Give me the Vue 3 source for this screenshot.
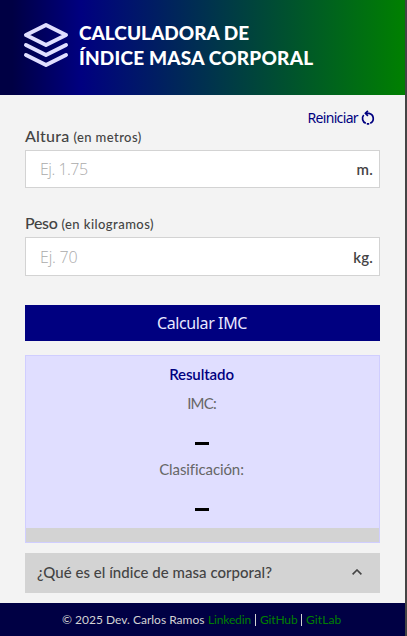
<script setup>
import { ref } from 'vue'

const height = ref('')
const weight = ref('')
const bmi = ref('')
const category = ref('')

function calculate() {
  const h = parseFloat(height.value)
  const w = parseFloat(weight.value)
  if (!(h > 0) || !(w > 0)) return
  const value = w / (h * h)
  bmi.value = value.toFixed(1)
  category.value = value < 18.5 ? 'Bajo peso' : value < 25 ? 'Normal' : value < 30 ? 'Sobrepeso' : 'Obesidad'
}

function reset() {
  height.value = ''
  weight.value = ''
  bmi.value = ''
  category.value = ''
}
</script>

<template>
  <div class="page">
    <header class="header">
      <svg class="logo" viewBox="0 0 24 24" fill="none" stroke="#e0deff" stroke-width="2" stroke-linecap="round" stroke-linejoin="round">
        <polygon points="12 2 2 7 12 12 22 7" />
        <polyline points="2 12 12 17 22 12" />
        <polyline points="2 17 12 22 22 17" />
      </svg>
      <h1 class="title"><span class="t1">CALCULADORA DE</span><br /><span class="t2">ÍNDICE MASA CORPORAL</span></h1>
    </header>

    <main class="main">
      <button class="reset" type="button" @click="reset">
        <span class="reset-text">Reiniciar</span>
        <svg class="reset-icon" viewBox="0 0 14 16" fill="none" stroke="#000080" stroke-width="1.7">
          <path d="M4.8 3.3H8A5.3 5.3 0 0 1 9.2 13.3M8.2 13.8H5.8M4.8 13.3A5.3 5.3 0 0 1 2.7 5" />
          <path d="M6.9 .8L4.4 3.3l2.5 2.5" />
        </svg>
      </button>

      <label class="label" for="height"><span class="altura">Altura</span><span class="hint metros">(en metros)</span></label>
      <div class="field">
        <input id="height" v-model="height" class="input" placeholder="Ej. 1.75" />
        <span class="unit">m.</span>
      </div>

      <label class="label second" for="weight"><span class="peso">Peso</span><span class="hint kilos">(en kilogramos)</span></label>
      <div class="field tall">
        <input id="weight" v-model="weight" class="input" placeholder="Ej. 70" />
        <span class="unit">kg.</span>
      </div>

      <button class="calculate" type="button" @click="calculate">Calcular IMC</button>

      <section class="result">
        <h2 class="result-title">Resultado</h2>
        <p class="caption imc">IMC:</p>
        <p class="value"><span v-if="bmi">{{ bmi }}</span><i v-else class="dash"></i></p>
        <p class="caption">Clasificación:</p>
        <p class="value"><span v-if="category">{{ category }}</span><i v-else class="dash"></i></p>
        <div class="band"></div>
      </section>

      <div class="question">
        <span class="question-text">¿Qué es el índice de masa corporal?</span>
        <svg class="chevron" viewBox="0 0 10 6" fill="none" stroke="#444" stroke-width="1.6"><path d="M.6 5.4L5 1l4.4 4.4" /></svg>
      </div>
    </main>

    <footer class="footer">
      <span class="copy">© 2025 Dev. Carlos Ramos</span>
      <a class="link linkedin">Linkedin</a>
      <i class="bar"></i>
      <a class="link github">GitHub</a>
      <i class="bar"></i>
      <a class="link gitlab">GitLab</a>
    </footer>
  </div>
</template>

<style>
body { margin: 0; overflow: hidden; }
</style>

<style scoped>
* { box-sizing: border-box; }
.page {
  width: 407px;
  height: 636px;
  display: flex;
  flex-direction: column;
  background: #f3f3f3;
  border-right: 2px solid #444;
  font-family: Lato, sans-serif;
  color: #444;
}
.header {
  height: 95px;
  flex: none;
  display: flex;
  padding: 21px 0 0 22px;
  background: linear-gradient(90deg, #000044 0, #000044 3%, #000080 20%, #008000 100%);
}
.logo { width: 48px; height: 48px; flex: none; }
.title {
  margin: -1px 0 0 9px;
  font-size: 19px;
  line-height: 25px;
  font-weight: 900;
  color: #fff;
  white-space: nowrap;
}
.t1 { letter-spacing: 0; }
.t2 { letter-spacing: 0.2px; }
.main { height: 508px; flex: none; display: flex; flex-direction: column; padding: 12px 25px 0; }
button { border: 0; padding: 0; }
.reset {
  align-self: flex-end;
  display: flex;
  align-items: center;
  height: 20px;
  margin-right: 6px;
  background: none;
  color: #000080;
  font: 14px/20px "Noto Sans", sans-serif;
}
.reset-text { margin-top: 2px; letter-spacing: -0.65px; }
.reset-icon { width: 14px; height: 16px; margin: 1px -1px 0 3px; }
.label { display: flex; align-items: baseline; height: 23px; line-height: 18px; font-size: 16px; font-weight: 500; white-space: nowrap; }
.altura { letter-spacing: 0.2px; }
.peso { letter-spacing: -0.35px; }
.hint { font-size: 13px; margin-left: 4px; }
.metros { letter-spacing: 0.42px; }
.kilos { letter-spacing: 0.45px; }
.second { margin-top: 26px; }
.field { display: flex; align-items: center; width: 355px; height: 38px; background: #fff; border: 1px solid #d3d3d3; }
.tall { height: 39px; margin-top: 0; }
.input {
  flex: 1;
  min-width: 0;
  height: 36px;
  padding: 0 0 0 14px;
  border: 0;
  outline: 0;
  background: none;
  font: 300 16px "Open Sans", sans-serif;
  letter-spacing: -0.5px;
  color: #444;
}
.tall .input { letter-spacing: -0.2px; }
.input::placeholder { color: #aaa; opacity: 1; }
.unit { font-size: 15px; font-weight: 600; margin: 0 6px 0 0; letter-spacing: 0.2px; }
.calculate { height: 36px; flex: none; margin-top: 29px; padding-right: 1px; background: #000080; color: #e8e8ff; font: 16px/36px "Noto Sans", sans-serif; letter-spacing: -0.4px; }
.result { height: 188px; flex: none; display: flex; flex-direction: column; align-items: center; margin-top: 14px; border: 1px solid #d0ceff; background: #e0deff; }
.result-title { margin: 8px 2px 0 0; height: 30px; font-size: 15px; line-height: 20px; font-weight: 600; letter-spacing: -0.1px; color: #000080; }
.caption { margin: 0 2px 0 0; height: 20px; font-size: 15px; line-height: 19px; letter-spacing: -0.1px; color: #666; }
.imc { letter-spacing: -0.8px; }
.value { display: flex; align-items: center; height: 46px; margin: 0; font-size: 22px; font-weight: 700; color: #000; }
.dash { width: 14px; height: 3px; margin: 12px 1px 0 0; background: #000; }
.band { align-self: stretch; height: 14px; margin-top: auto; background: #d3d3d3; }
.question { height: 40px; flex: none; margin-top: 10px; padding: 0 18px 0 12px; display: flex; align-items: center; justify-content: space-between; background: #d3d3d3; }
.question-text { margin-top: -2px; font-size: 15px; font-weight: 500; letter-spacing: 0.03px; white-space: nowrap; }
.chevron { width: 10px; height: 6px; margin-top: -3px; }
.footer { height: 33px; flex: none; display: flex; align-items: center; padding-left: 62px; background: #000044; color: #d3d3d3; font-size: 12px; white-space: nowrap; }
.copy { width: 146px; }
.link { color: #008000; }
.linkedin { width: 47px; letter-spacing: -0.15px; }
.github { width: 41px; margin-left: 4px; letter-spacing: -0.15px; }
.gitlab { margin-left: 4px; letter-spacing: 0.1px; }
.bar { width: 1px; height: 12px; background: #d3d3d3; }
</style>
